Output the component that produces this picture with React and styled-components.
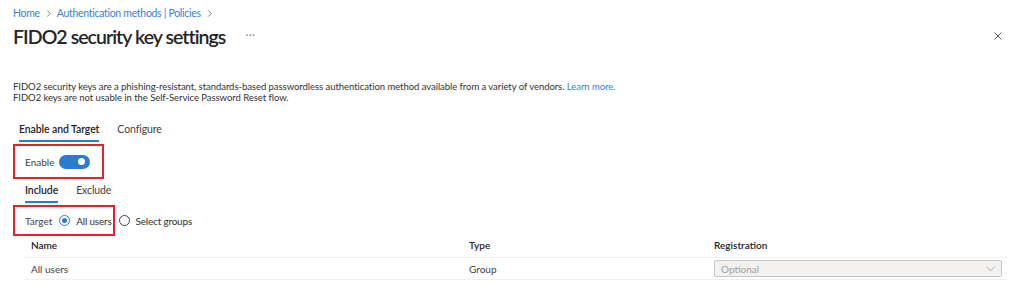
import styled, { createGlobalStyle } from "styled-components";

const GlobalStyle = createGlobalStyle`
  body {
    margin: 0;
    background: #fff;
    font-family: Lato, "Open Sans", sans-serif;
    color: #323130;
  }
`;

const Page = styled.div`
  width: 1024px;
  height: 297px;
  box-sizing: border-box;
  padding: 6px 17px 0 13px;
  overflow: hidden;
`;

const Breadcrumb = styled.nav`
  display: flex;
  align-items: center;
  gap: 5px;
  height: 14px;
  font-size: 10.5px;
  letter-spacing: -0.3px;
  color: #3a7fd3;
`;

const Chevron = styled.svg`
  width: 7px;
  height: 7px;
  margin-top: 1px;
`;

const TitleRow = styled.div`
  display: flex;
  align-items: center;
  height: 26px;
  margin-top: 3px;
`;

const Title = styled.h1`
  margin: 0;
  font-size: 19.5px;
  font-weight: 600;
  letter-spacing: -0.95px;
  color: #242424;
`;

const More = styled.span`
  margin-left: 20px;
  font-size: 11px;
  color: #8a8886;
  letter-spacing: 0.5px;
  margin-bottom: 4px;
`;

const Close = styled.svg`
  margin-left: auto;
  margin-right: 5px;
  width: 8px;
  height: 8px;
`;

const Description = styled.p`
  margin: 32px 0 0;
  font-size: 9.5px;
  letter-spacing: -0.05px;
  line-height: 11px;
  color: #323130;
`;

const Link = styled.a`
  color: #3a7fd3;
  text-decoration: none;
`;

const Tabs = styled.div`
  display: flex;
  gap: 18px;
  margin: ${(p) => (p.$sub ? "3px 0 0 12px" : "18px 0 0 6px")};
`;

const Tab = styled.div`
  font-size: 10.5px;
  letter-spacing: -0.1px;
  height: 17px;
  line-height: 17px;
  padding-bottom: 2px;
  font-weight: ${(p) => (p.$active ? 600 : 400)};
  color: ${(p) => (p.$active ? "#242424" : "#424242")};
  border-bottom: 2px solid ${(p) => (p.$active ? "#2b7bd1" : "transparent")};
`;

const Highlight = styled.div`
  display: flex;
  align-items: center;
  gap: 5px;
  width: 91px;
  height: 35px;
  box-sizing: border-box;
  margin-top: 2px;
  padding-left: 10px;
  border: 2px solid #e3212f;
`;

const Label = styled.span`
  font-size: 10px;
  color: #424242;
`;

const Toggle = styled.span`
  position: relative;
  width: 31px;
  height: 14px;
  border-radius: 7px;
  background: #2b7bd1;
  &::after {
    content: "";
    position: absolute;
    right: 5px;
    top: 3.5px;
    width: 7px;
    height: 7px;
    border-radius: 50%;
    background: #fff;
  }
`;

const TargetRow = styled.div`
  position: relative;
  display: flex;
  align-items: center;
  height: 31px;
  margin-top: 2px;
  padding-left: 12px;
  gap: 7px;
`;

const TargetMark = styled.div`
  position: absolute;
  left: 0;
  top: 0;
  width: 102px;
  height: 31px;
  box-sizing: border-box;
  border: 2px solid #e3212f;
  pointer-events: none;
`;

const Radio = styled.label`
  display: flex;
  align-items: center;
  gap: 6px;
  font-size: 10px;
  letter-spacing: -0.2px;
  color: #323130;
`;

const Circle = styled.span`
  position: relative;
  width: 11px;
  height: 11px;
  box-sizing: border-box;
  border-radius: 50%;
  border: 1px solid ${(p) => (p.$on ? "#2b7bd1" : "#424242")};
  &::after {
    content: "";
    display: ${(p) => (p.$on ? "block" : "none")};
    position: absolute;
    left: 2px;
    top: 2px;
    width: 5px;
    height: 5px;
    border-radius: 50%;
    background: #2b7bd1;
  }
`;

const Table = styled.div`
  margin-left: 12px;
`;

const Row = styled.div`
  display: grid;
  grid-template-columns: 438px 245px 1fr;
  align-items: center;
  height: 22px;
  box-sizing: border-box;
  padding: ${(p) => (p.$head ? "0 5px 4px 6px" : "0 5px 0 6px")};
  border-bottom: 1px solid #f0f0f0;
  font-size: 10px;
  font-weight: ${(p) => (p.$head ? 600 : 400)};
  color: ${(p) => (p.$head ? "#242424" : "#424242")};
`;

const Select = styled.div`
  display: flex;
  align-items: center;
  justify-content: space-between;
  height: 17px;
  box-sizing: border-box;
  padding: 0 6px;
  background: #f3f2f1;
  border: 1px solid #c8c6c4;
  border-radius: 2px;
  color: #a19f9d;
`;

const Caret = styled.svg`
  width: 9px;
  height: 6px;
`;

export default function App() {
  return (
    <Page>
      <GlobalStyle />
      <Breadcrumb>
        <span>Home</span>
        <Chevron viewBox="0 0 8 8">
          <path d="M2.5 0.5 L6 4 L2.5 7.5" fill="none" stroke="#605e5c" strokeWidth="0.9" />
        </Chevron>
        <span>Authentication methods | Policies</span>
        <Chevron viewBox="0 0 8 8">
          <path d="M2.5 0.5 L6 4 L2.5 7.5" fill="none" stroke="#605e5c" strokeWidth="0.9" />
        </Chevron>
      </Breadcrumb>
      <TitleRow>
        <Title>FIDO2 security key settings</Title>
        <More>···</More>
        <Close viewBox="0 0 8 8">
          <path d="M0.5 0.5 L7.5 7.5 M7.5 0.5 L0.5 7.5" stroke="#605e5c" strokeWidth="1" />
        </Close>
      </TitleRow>
      <Description>
        FIDO2 security keys are a phishing-resistant, standards-based passwordless authentication
        method available from a variety of vendors. <Link href="#">Learn more.</Link>
        <br />
        FIDO2 keys are not usable in the Self-Service Password Reset flow.
      </Description>
      <Tabs>
        <Tab $active>Enable and Target</Tab>
        <Tab>Configure</Tab>
      </Tabs>
      <Highlight>
        <Label>Enable</Label>
        <Toggle />
      </Highlight>
      <Tabs $sub>
        <Tab $active>Include</Tab>
        <Tab>Exclude</Tab>
      </Tabs>
      <TargetRow>
        <TargetMark />
        <Label>Target</Label>
        <Radio>
          <Circle $on />
          All users
        </Radio>
        <Radio>
          <Circle />
          Select groups
        </Radio>
      </TargetRow>
      <Table>
        <Row $head>
          <span>Name</span>
          <span>Type</span>
          <span>Registration</span>
        </Row>
        <Row>
          <span>All users</span>
          <span>Group</span>
          <Select>
            <span>Optional</span>
            <Caret viewBox="0 0 9 6">
              <path d="M0.5 0.8 L4.5 4.8 L8.5 0.8" fill="none" stroke="#a19f9d" strokeWidth="0.9" />
            </Caret>
          </Select>
        </Row>
      </Table>
    </Page>
  );
}
